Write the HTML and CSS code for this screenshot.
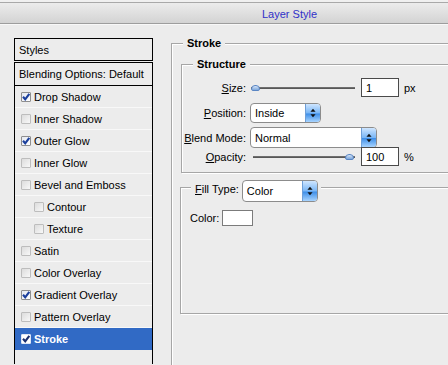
FILE: index.html
```html
<!DOCTYPE html>
<html lang="en">
<head>
  <meta charset="UTF-8">
  <title>Layer Style</title>
  <link rel="stylesheet" href="styles.css">
</head>
<body>
  <div class="topstrip"></div>
  <div class="titlebar"><span class="title">Layer Style</span></div>

  <div class="main">
    <div class="panel">
      <div class="panel-head">Styles</div>
      <div class="panel-list">
        <div class="blend-row">Blending Options: Default</div>
        <div class="item"><span class="cb on"><svg viewBox="0 0 10 10"><path d="M2 4.8 L4.2 7.3 L8.3 1.8"/></svg></span>Drop Shadow</div>
        <div class="item"><span class="cb"></span>Inner Shadow</div>
        <div class="item"><span class="cb on"><svg viewBox="0 0 10 10"><path d="M2 4.8 L4.2 7.3 L8.3 1.8"/></svg></span>Outer Glow</div>
        <div class="item"><span class="cb"></span>Inner Glow</div>
        <div class="item"><span class="cb"></span>Bevel and Emboss</div>
        <div class="item sub"><span class="cb"></span>Contour</div>
        <div class="item sub"><span class="cb"></span>Texture</div>
        <div class="item"><span class="cb"></span>Satin</div>
        <div class="item"><span class="cb"></span>Color Overlay</div>
        <div class="item"><span class="cb on"><svg viewBox="0 0 10 10"><path d="M2 4.8 L4.2 7.3 L8.3 1.8"/></svg></span>Gradient Overlay</div>
        <div class="item"><span class="cb"></span>Pattern Overlay</div>
        <div class="item selected"><span class="cb on"><svg viewBox="0 0 10 10"><path d="M2 4.8 L4.2 7.3 L8.3 1.8"/></svg></span>Stroke</div>
      </div>
    </div>

    <div class="group stroke-group">
      <div class="group-title">Stroke</div>

      <div class="group structure">
        <div class="group-title">Structure</div>
        <div class="row size-row">
          <label><u>S</u>ize:</label>
          <div class="slider"><span class="thumb"></span></div>
          <div class="num">1</div>
          <span class="unit">px</span>
        </div>
        <div class="row pos-row">
          <label><u>P</u>osition:</label>
          <div class="select pos-select"><span>Inside</span><span class="sel-btn"><svg viewBox="0 0 7 11"><path d="M3.5 0.5 L6.5 4 L0.5 4 Z M3.5 10.5 L6.5 7 L0.5 7 Z"/></svg></span></div>
        </div>
        <div class="row blend-mode-row">
          <label><u>B</u>lend Mode:</label>
          <div class="select blend-select"><span>Normal</span><span class="sel-btn"><svg viewBox="0 0 7 11"><path d="M3.5 0.5 L6.5 4 L0.5 4 Z M3.5 10.5 L6.5 7 L0.5 7 Z"/></svg></span></div>
        </div>
        <div class="row opa-row">
          <label><u>O</u>pacity:</label>
          <div class="slider"><span class="thumb right"></span></div>
          <div class="num">100</div>
          <span class="unit">%</span>
        </div>
      </div>

      <div class="group fill">
        <div class="fill-legend">
          <label><u>F</u>ill Type:</label>
          <div class="select fill-select"><span>Color</span><span class="sel-btn"><svg viewBox="0 0 7 11"><path d="M3.5 0.5 L6.5 4 L0.5 4 Z M3.5 10.5 L6.5 7 L0.5 7 Z"/></svg></span></div>
        </div>
        <div class="color-row">
          <label>Color:</label>
          <span class="swatch"></span>
        </div>
      </div>
    </div>
  </div>
</body>
</html>
```

FILE: styles.css
```css
html, body {
  margin: 0;
  height: 100%;
  overflow: hidden;
}
body {
  background: #ececec;
  font-family: "Liberation Sans", Arial, sans-serif;
  font-size: 11px;
  color: #000;
}
.topstrip {
  height: 2px;
  background: #f0f0f0;
  border-bottom: 1px solid #a9a9a9;
}
.titlebar {
  height: 20px;
  background: linear-gradient(#ececec, #d3d3d3);
  border-bottom: 1px solid #9d9d9d;
  box-shadow: 0 1px 0 #f8f8f8;
  padding-left: 262px;
  display: flex;
  align-items: center;
}
.title {
  color: #3030c8;
  font-size: 11px;
  padding-top: 1px;
}
.main {
  display: flex;
  align-items: flex-start;
  padding: 14px 0 0 14px;
}

/* styles list */
.panel {
  width: 139px;
  flex: none;
}
.panel-head {
  height: 21px;
  border: 1px solid #000;
  padding-left: 4px;
  display: flex;
  align-items: center;
  margin-bottom: 1px;
}
.panel-list {
  border: 1px solid #000;
  border-bottom: none;
  height: 301px;
}
.blend-row {
  height: 22px;
  border-bottom: 1px solid #000;
  padding-left: 4px;
  display: flex;
  align-items: center;
}
.item {
  height: 21px;
  border-bottom: 1px solid #f8f8f8;
  padding-left: 6px;
  display: flex;
  align-items: center;
}
.item.sub {
  padding-left: 19px;
}
.item.selected {
  background: #316ac5;
  color: #fff;
  font-weight: bold;
  border-bottom-color: #316ac5;
}
.cb {
  width: 8px;
  height: 8px;
  border: 1px solid #bdbdbd;
  border-radius: 1px;
  background: linear-gradient(135deg, #dcdcdc, #f8f8f8);
  margin-right: 3px;
  flex: none;
  display: flex;
}
.cb.on {
  border-color: #8e8e8e;
  background: linear-gradient(135deg, #e4e8f0, #ffffff);
}
.selected .cb.on {
  border-color: #dde6f5;
  background: #fff;
}
.cb svg {
  width: 10px;
  height: 10px;
  margin: -1px;
}
.cb path {
  fill: none;
  stroke: #1b3f9c;
  stroke-width: 2.1;
}
.selected .cb path {
  stroke: #1a2f70;
}

/* groups */
.group {
  border: 1px solid #a6a6a6;
  box-shadow: inset 1px 1px #fff, 1px 1px #fff;
}
.group-title {
  display: inline-block;
  font-weight: bold;
  line-height: 13px;
  background: #ececec;
  padding: 0 4px;
  margin: -7px 0 0 11px;
  vertical-align: top;
}
.stroke-group {
  flex: none;
  width: 277px;
  height: 321px;
  margin: 5px 0 0 18px;
  border-right: none;
  border-bottom: none;
}
.structure {
  margin: 8px 0 0 9px;
  padding-bottom: 6px;
  border-right: none;
}
.row {
  display: flex;
  align-items: center;
}
.row label {
  width: 64px;
  text-align: right;
  margin-right: 4px;
  flex: none;
}
.size-row {
  height: 19px;
  margin-top: 1px;
}
.pos-row {
  height: 20px;
  margin-top: 6px;
}
.blend-mode-row {
  height: 21px;
  margin-top: 4px;
}
.opa-row {
  height: 19px;
  margin-top: -1px;
}
.slider {
  width: 104px;
  height: 6px;
  margin-right: 6px;
  margin-left: 1px;
  display: flex;
  align-items: center;
  background: linear-gradient(#ececec 0, #ececec 2px, #7a7a7a 2px, #4c4c4c 4px, #ececec 4px);
  border-radius: 2px;
}
.opa-row .slider {
  margin-left: 3px;
  width: 102px;
}
.thumb {
  width: 7px;
  height: 4px;
  border: 1px solid #5a86c4;
  border-radius: 4px 4px 2px 2px;
  background: linear-gradient(#d4e4f8, #7ea8dc);
}
.thumb.right {
  margin-left: auto;
  margin-right: 1px;
}
.num {
  width: 32px;
  height: 17px;
  border: 1px solid #4a4a4a;
  background: #fff;
  padding-left: 4px;
  display: flex;
  align-items: center;
}
.unit {
  margin-left: 5px;
}
.select {
  height: 100%;
  box-sizing: border-box;
  border: 1px solid #8c8c8c;
  border-radius: 4px;
  background: #fff;
  display: flex;
  align-items: center;
  justify-content: space-between;
  padding-left: 4px;
}
.pos-select {
  width: 71px;
}
.blend-select {
  width: 127px;
}
.sel-btn {
  width: 14px;
  height: 100%;
  border-left: 1px solid #6e9fd8;
  border-radius: 0 3px 3px 0;
  background: linear-gradient(#cfe6ff, #79b6f6 50%, #3f8fe8 55%, #a8d4ff);
  display: flex;
  align-items: center;
  justify-content: center;
}
.sel-btn svg {
  width: 6px;
  height: 10px;
}
.sel-btn path {
  fill: #111;
}

/* fill type */
.fill {
  margin: 14px 0 0 8px;
  height: 127px;
  box-sizing: border-box;
  border-right: none;
}
.fill-legend {
  display: inline-flex;
  align-items: center;
  height: 22px;
  margin: -8px 0 0 10px;
  padding: 0 3px 0 4px;
  background: #ececec;
  vertical-align: top;
}
.fill-legend label {
  margin: 0 3px 4px 0;
}
.fill-select {
  width: 76px;
  height: 22px;
}
.color-row {
  display: flex;
  align-items: center;
  margin: 8px 0 0 9px;
}
.color-row label {
  margin-right: 3px;
}
.swatch {
  width: 29px;
  height: 14px;
  border: 1px solid #7b7b7b;
  background: #fff;
}
```
